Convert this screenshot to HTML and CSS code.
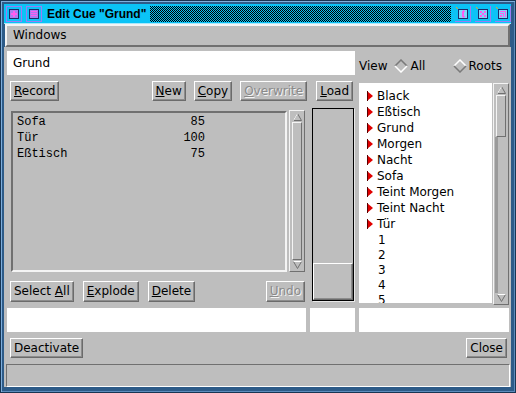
FILE: index.html
```html
<!DOCTYPE html>
<html lang="de">
<head>
  <meta charset="UTF-8">
  <title>Edit Cue "Grund"</title>
  <link rel="stylesheet" href="styles.css">
</head>
<body>
  <div class="window">
    <div class="titlebar">
      <svg class="tb-icon" width="16" height="16" viewBox="0 0 16 16" shape-rendering="crispEdges">
        <rect x="0" y="0" width="16" height="16" fill="#9b7cf4"/>
        <rect x="1" y="1" width="14" height="14" fill="#0bc3f6"/>
        <rect x="3" y="3" width="10" height="10" fill="#1d2b6b"/>
        <rect x="4" y="4" width="8" height="8" fill="#a77ef2"/>
        <path d="M7 5h2v2h2v2h-2v2h-2v-2h-2v-2h2z" fill="#ff5cf0"/>
      </svg>
      <svg class="tb-icon" width="16" height="16" viewBox="0 0 16 16" shape-rendering="crispEdges">
        <rect x="0" y="0" width="16" height="16" fill="#9b7cf4"/>
        <rect x="1" y="1" width="14" height="14" fill="#0bc3f6"/>
        <rect x="3" y="3" width="10" height="10" fill="#1d2b6b"/>
        <rect x="4" y="4" width="8" height="8" fill="#a77ef2"/>
        <rect x="5" y="5" width="6" height="1" fill="#ff5cf0"/>
        <rect x="5" y="7" width="6" height="1" fill="#ff5cf0"/>
        <rect x="5" y="9" width="6" height="1" fill="#ff5cf0"/>
      </svg>
      <span class="title">Edit Cue "Grund"</span>
      <svg class="tb-fill" shape-rendering="crispEdges">
        <defs>
          <pattern id="chk" width="2" height="2" patternUnits="userSpaceOnUse">
            <rect width="2" height="2" fill="#0bc3f6"/>
            <rect width="1" height="1" fill="#000"/>
            <rect x="1" y="1" width="1" height="1" fill="#000"/>
          </pattern>
        </defs>
        <rect width="100%" height="100%" fill="url(#chk)"/>
      </svg>
      <svg class="tb-icon" width="16" height="16" viewBox="0 0 16 16" shape-rendering="crispEdges">
        <rect x="0" y="0" width="16" height="16" fill="#9b7cf4"/>
        <rect x="0" y="0" width="15" height="15" fill="#0bc3f6"/>
        <rect x="1" y="1" width="1" height="1" fill="#f0a020"/>
        <rect x="2" y="2" width="1" height="1" fill="#f0a020"/>
        <rect x="3" y="3" width="10" height="10" fill="#1d2b6b"/>
        <rect x="4" y="4" width="8" height="8" fill="#7fd8fa"/>
        <path d="M8 4l2 2h-1v4h1l-2 2l-2-2h1v-4h-1z" fill="#ff5cf0"/>
      </svg>
      <svg class="tb-icon" width="16" height="16" viewBox="0 0 16 16" shape-rendering="crispEdges">
        <rect x="0" y="0" width="16" height="16" fill="#9b7cf4"/>
        <rect x="0" y="0" width="15" height="15" fill="#0bc3f6"/>
        <rect x="1" y="1" width="1" height="1" fill="#f0a020"/>
        <rect x="2" y="2" width="1" height="1" fill="#f0a020"/>
        <rect x="3" y="3" width="10" height="10" fill="#1d2b6b"/>
        <rect x="4" y="4" width="8" height="8" fill="#7fd8fa"/>
        <rect x="5" y="5" width="2" height="2" fill="#ff5cf0"/>
        <rect x="9" y="5" width="2" height="2" fill="#ff5cf0"/>
        <rect x="7" y="7" width="2" height="2" fill="#ff5cf0"/>
        <rect x="5" y="9" width="2" height="2" fill="#ff5cf0"/>
        <rect x="9" y="9" width="2" height="2" fill="#ff5cf0"/>
      </svg>
      <svg class="tb-icon" width="16" height="16" viewBox="0 0 16 16" shape-rendering="crispEdges">
        <rect x="0" y="0" width="16" height="16" fill="#9b7cf4"/>
        <rect x="0" y="0" width="15" height="15" fill="#0bc3f6"/>
        <rect x="1" y="1" width="1" height="1" fill="#f0a020"/>
        <rect x="2" y="2" width="1" height="1" fill="#f0a020"/>
        <rect x="3" y="3" width="10" height="10" fill="#1d2b6b"/>
        <rect x="4" y="4" width="8" height="8" fill="#7fd8fa"/>
        <path d="M5 5h6v6h-1v-5h-5z M5 7h4v4h-1v-3h-3z M5 9h2v2h-2z" fill="#ff5cf0"/>
      </svg>
    </div>

    <div class="menubar"><span>Windows</span></div>

    <div class="content">
      <div class="grid">
        <div class="name">Grund</div>

        <div class="view">
          <span class="view-label">View</span>
          <span class="radio">
            <svg width="14" height="14" viewBox="0 0 14 14">
              <path d="M1 7L7 1L13 7L7 13Z" fill="#bebebe"/>
              <path d="M1 7L7 1L13 7" fill="none" stroke="#7a7a7a" stroke-width="1.5"/>
              <path d="M1 7L7 13L13 7" fill="none" stroke="#fff" stroke-width="1.5"/>
            </svg>All
          </span>
          <span class="radio radio-last">
            <svg width="14" height="14" viewBox="0 0 14 14">
              <path d="M1 7L7 1L13 7L7 13Z" fill="#bebebe"/>
              <path d="M1 7L7 1L13 7" fill="none" stroke="#fff" stroke-width="1.5"/>
              <path d="M1 7L7 13L13 7" fill="none" stroke="#7a7a7a" stroke-width="1.5"/>
            </svg>Roots
          </span>
        </div>

        <div class="toolbar">
          <button class="btn"><u>R</u>ecord</button>
          <button class="btn push-right"><u>N</u>ew</button>
          <button class="btn"><u>C</u>opy</button>
          <button class="btn disabled"><u>O</u>verwrite</button>
          <button class="btn load"><u>L</u>oad</button>
        </div>

        <div class="tree">
          <ul class="tree-list">
            <li><svg class="mark" width="6" height="10" viewBox="0 0 6 10"><path d="M0 0L6 5L0 10Z" fill="#e00000"/><path d="M0.5 0V10" stroke="#5a0000"/></svg>Black</li>
            <li><svg class="mark" width="6" height="10" viewBox="0 0 6 10"><path d="M0 0L6 5L0 10Z" fill="#e00000"/><path d="M0.5 0V10" stroke="#5a0000"/></svg>Eßtisch</li>
            <li><svg class="mark" width="6" height="10" viewBox="0 0 6 10"><path d="M0 0L6 5L0 10Z" fill="#e00000"/><path d="M0.5 0V10" stroke="#5a0000"/></svg>Grund</li>
            <li><svg class="mark" width="6" height="10" viewBox="0 0 6 10"><path d="M0 0L6 5L0 10Z" fill="#e00000"/><path d="M0.5 0V10" stroke="#5a0000"/></svg>Morgen</li>
            <li><svg class="mark" width="6" height="10" viewBox="0 0 6 10"><path d="M0 0L6 5L0 10Z" fill="#e00000"/><path d="M0.5 0V10" stroke="#5a0000"/></svg>Nacht</li>
            <li><svg class="mark" width="6" height="10" viewBox="0 0 6 10"><path d="M0 0L6 5L0 10Z" fill="#e00000"/><path d="M0.5 0V10" stroke="#5a0000"/></svg>Sofa</li>
            <li><svg class="mark" width="6" height="10" viewBox="0 0 6 10"><path d="M0 0L6 5L0 10Z" fill="#e00000"/><path d="M0.5 0V10" stroke="#5a0000"/></svg>Teint Morgen</li>
            <li><svg class="mark" width="6" height="10" viewBox="0 0 6 10"><path d="M0 0L6 5L0 10Z" fill="#e00000"/><path d="M0.5 0V10" stroke="#5a0000"/></svg>Teint Nacht</li>
            <li><svg class="mark" width="6" height="10" viewBox="0 0 6 10"><path d="M0 0L6 5L0 10Z" fill="#e00000"/><path d="M0.5 0V10" stroke="#5a0000"/></svg>Tür</li>
            <li class="leaf">1</li>
            <li class="leaf">2</li>
            <li class="leaf">3</li>
            <li class="leaf">4</li>
            <li class="leaf">5</li>
          </ul>
          <div class="scrollbar">
            <div class="sb-btn">
              <svg width="9" height="8" viewBox="0 0 9 8"><path d="M0.5 7.5L4.5 0.5L8.5 7.5Z" fill="#bebebe" stroke="#707070"/><path d="M0.5 7.5L4.5 0.5" stroke="#fff"/></svg>
            </div>
            <div class="sb-thumb tree-thumb"></div>
            <div class="sb-track"></div>
            <div class="sb-btn">
              <svg width="9" height="8" viewBox="0 0 9 8"><path d="M0.5 0.5L8.5 0.5L4.5 7.5Z" fill="#bebebe" stroke="#707070"/><path d="M0.5 0.5L8.5 0.5" stroke="#fff"/></svg>
            </div>
          </div>
        </div>

        <div class="cues">
          <div class="cue-list">
            <div class="cue-row"><span>Sofa</span><span>85</span></div>
            <div class="cue-row"><span>Tür</span><span>100</span></div>
            <div class="cue-row"><span>Eßtisch</span><span>75</span></div>
          </div>
          <div class="scrollbar">
            <div class="sb-btn">
              <svg width="9" height="8" viewBox="0 0 9 8"><path d="M0.5 7.5L4.5 0.5L8.5 7.5Z" fill="#bebebe" stroke="#707070"/><path d="M0.5 7.5L4.5 0.5" stroke="#fff"/></svg>
            </div>
            <div class="sb-thumb full"></div>
            <div class="sb-btn">
              <svg width="9" height="8" viewBox="0 0 9 8"><path d="M0.5 0.5L8.5 0.5L4.5 7.5Z" fill="#bebebe" stroke="#707070"/><path d="M0.5 0.5L8.5 0.5" stroke="#fff"/></svg>
            </div>
          </div>
        </div>

        <div class="fader">
          <div class="fader-thumb"></div>
        </div>

        <div class="actions">
          <button class="btn">Select <u>A</u>ll</button>
          <button class="btn"><u>E</u>xplode</button>
          <button class="btn"><u>D</u>elete</button>
          <button class="btn disabled push-right"><u>U</u>ndo</button>
        </div>

        <div class="field field-left"></div>
        <div class="field field-mid"></div>
        <div class="field field-right"></div>
      </div>

      <div class="footer">
        <button class="btn">Deactivate</button>
        <button class="btn">Close</button>
      </div>

      <div class="status"></div>
    </div>
  </div>
</body>
</html>
```

FILE: styles.css
```css
body {
  margin: 0;
  font-family: "DejaVu Sans", sans-serif;
  font-size: 12px;
  color: #000;
  background: #2d5b88;
}

.window {
  width: 516px;
  height: 393px;
  box-sizing: border-box;
  border: 1px solid #173553;
  padding: 3px 4px 5px 3px;
  background: #2d5b88;
  box-shadow: inset 1px 1px 0 #7eaedc, inset -1px -1px 0 #5c8cbc;
  display: flex;
  flex-direction: column;
}

/* Titelleiste */
.titlebar {
  height: 20px;
  box-sizing: border-box;
  background: #0bc3f6;
  border-bottom: 1px solid #a8e8fb;
  display: flex;
  align-items: center;
  gap: 4px;
  padding-left: 2px;
}

.tb-icon {
  flex: none;
  display: block;
}

.title {
  font-family: "Liberation Sans", Arial, sans-serif;
  font-weight: bold;
  font-size: 12px;
  margin-left: 1px;
  white-space: nowrap;
}

.tb-fill {
  flex: 1;
  height: 16px;
  display: block;
}

.menubar {
  height: 23px;
  box-sizing: border-box;
  margin: 0 1px;
  border: 2px solid;
  border-color: #f4f4f4 #707070 #707070 #f4f4f4;
  background: #bebebe;
  padding-left: 6px;
  line-height: 19px;
}

.content {
  flex: 1;
  background: #bebebe;
  padding: 4px 2px 0 3px;
  display: flex;
  flex-direction: column;
}

.grid {
  display: grid;
  grid-template-columns: 299px 45px 150px;
  grid-template-rows: 24px 33px 169px 28px 27px;
  column-gap: 4px;
}

.name {
  grid-column: 1 / 3;
  grid-row: 1;
  background: #fff;
  padding-left: 6px;
  line-height: 24px;
}

.view {
  grid-column: 3;
  grid-row: 1;
  display: flex;
  align-items: center;
  padding-top: 5px;
}

.view-label {
  margin-right: 7px;
}

.radio {
  display: flex;
  align-items: center;
  gap: 2px;
}

.radio-last {
  margin-left: auto;
  margin-right: 7px;
}

.radio svg {
  display: block;
}

/* Knoepfe */
.btn {
  font: inherit;
  color: #000;
  height: 20px;
  padding: 0 3px;
  border: 1px solid;
  border-color: #fff #6b6b6b #6b6b6b #fff;
  background: #bebebe;
  box-shadow: inset -1px -1px 0 #8c8c8c;
  line-height: 17px;
  white-space: nowrap;
}

.btn.disabled {
  color: #8a8a8a;
  text-shadow: 1px 1px 0 #f4f4f4;
}

.push-right {
  margin-left: auto;
}

.toolbar {
  grid-column: 1 / 3;
  grid-row: 2;
  display: flex;
  align-items: flex-start;
  gap: 8px;
  padding: 6px 2px 0 3px;
}

.toolbar .load {
  margin-left: 1px;
}

/* Liste der Kanaele */
.cues {
  grid-column: 1;
  grid-row: 3;
  display: flex;
  gap: 2px;
  padding: 3px 1px 5px 4px;
}

.cue-list {
  flex: 1;
  border: 2px solid;
  border-color: #707070 #f4f4f4 #f4f4f4 #707070;
  padding: 1px 4px 0;
  font-family: "Liberation Mono", "Courier New", monospace;
  font-size: 12px;
  line-height: 16px;
}

.cue-row {
  width: 188px;
  display: flex;
  justify-content: space-between;
}

.scrollbar {
  width: 16px;
  box-sizing: border-box;
  border: 1px solid;
  border-color: #f4f4f4 #707070 #707070 #f4f4f4;
  display: flex;
  flex-direction: column;
  padding: 1px;
}

.cues .scrollbar {
  margin-top: -1px;
}

.sb-btn {
  height: 10px;
  display: flex;
  align-items: center;
  justify-content: center;
  flex: none;
}

.sb-btn svg {
  display: block;
}

.sb-thumb {
  border: 1px solid;
  border-color: #f4f4f4 #707070 #707070 #f4f4f4;
  margin: 0 1px;
}

.sb-thumb.full {
  flex: 1;
}

.tree-thumb {
  height: 40px;
  flex: none;
}

.sb-track {
  flex: 1;
  border-left: 3px solid #9a9a9a;
}

/* Fader */
.fader {
  grid-column: 2;
  grid-row: 3 / 5;
  margin: 0 1px 4px 2px;
  border: 1px solid #000;
  box-shadow: 1px 1px 0 #e8e8e8;
  display: flex;
  flex-direction: column;
  justify-content: flex-end;
}

.fader-thumb {
  height: 37px;
  box-sizing: border-box;
  border: 1px solid;
  border-color: #fff #6b6b6b #6b6b6b #fff;
  box-shadow: inset -1px -1px 0 #8c8c8c;
}

/* Baum rechts */
.tree {
  grid-column: 3;
  grid-row: 2 / 5;
  margin-top: 8px;
  display: flex;
  gap: 1px;
  min-height: 0;
}

.tree-list {
  flex: 1;
  margin: 0 0 2px;
  padding: 5px 0 0 8px;
  list-style: none;
  background: #fff;
  overflow: hidden;
}

.tree-list li {
  display: flex;
  align-items: center;
  height: 16px;
}

.tree-list li.leaf {
  height: 15px;
  padding-left: 11px;
}

.mark {
  display: block;
  margin-right: 4px;
  flex: none;
}

.actions {
  grid-column: 1;
  grid-row: 4;
  display: flex;
  align-items: flex-start;
  gap: 9px;
  padding: 4px 1px 0 3px;
}

.actions .btn {
  height: 21px;
}

.field {
  grid-row: 5;
  align-self: end;
  height: 24px;
  background: #fff;
}

.field-left {
  grid-column: 1;
}

.field-mid {
  grid-column: 2;
}

.field-right {
  grid-column: 3;
}

.footer {
  display: flex;
  justify-content: space-between;
  margin-top: 6px;
  padding: 0 2px 0 3px;
}

.status {
  margin: 6px -1px 0 -1px;
  height: 23px;
  box-sizing: border-box;
  border: 1px solid;
  border-color: #707070 #fff #fff #707070;
}
```
